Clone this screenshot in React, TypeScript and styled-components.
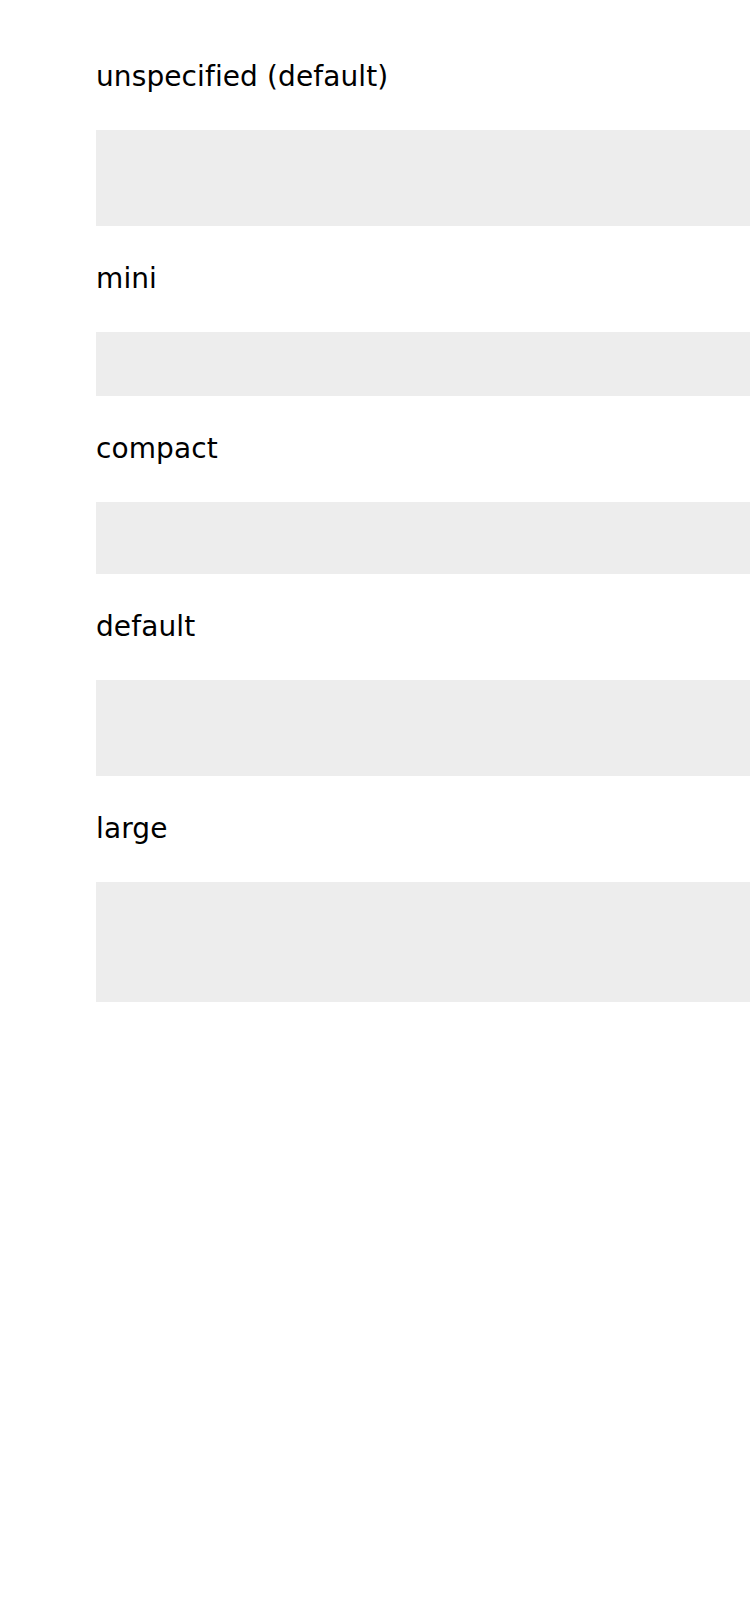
import React from "react";
import styled, { createGlobalStyle } from "styled-components";

const GlobalStyle = createGlobalStyle`
  html, body {
    margin: 0;
    padding: 0;
    background: #ffffff;
    overflow-x: hidden;
  }
  body {
    font-family: "DejaVu Sans", "Liberation Sans", sans-serif;
    color: #000000;
  }
`;

const Page = styled.main`
  display: flex;
  flex-direction: column;
  padding: 24px 0 0 96px;
`;

const Section = styled.section`
  display: flex;
  flex-direction: column;
`;

const Label = styled.h2`
  margin: 37px 0 37px 0;
  font-size: 28px;
  line-height: 32px;
  font-weight: 400;
  color: #000000;
  font-variant-ligatures: none;
  letter-spacing: 0.1px;
`;

const Placeholder = styled.div<{ $height: number }>`
  height: ${(p) => p.$height}px;
  width: 100%;
  background: #ededed;
`;

const sizes: { label: string; height: number }[] = [
  { label: "unspecified (default)", height: 96 },
  { label: "mini", height: 64 },
  { label: "compact", height: 72 },
  { label: "default", height: 96 },
  { label: "large", height: 120 },
];

export default function App() {
  return (
    <>
      <GlobalStyle />
      <Page>
        {sizes.map((s) => (
          <Section key={s.label}>
            <Label>{s.label}</Label>
            <Placeholder $height={s.height} />
          </Section>
        ))}
      </Page>
    </>
  );
}
